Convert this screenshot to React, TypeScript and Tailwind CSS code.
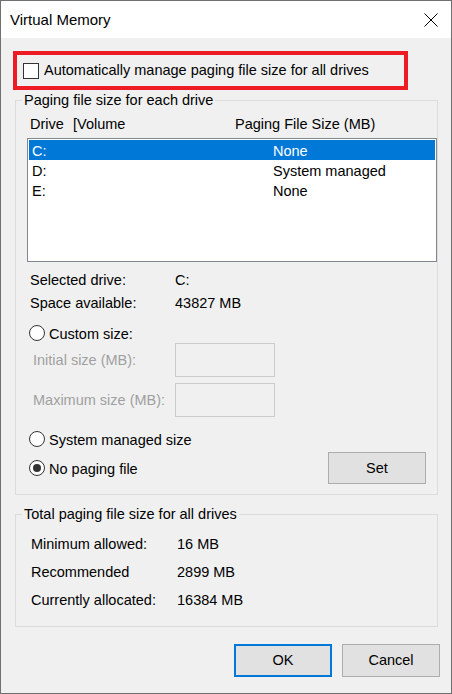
import { ReactNode } from 'react';

const font = { fontFamily: '"Liberation Sans", Arial, sans-serif' };

function Radio({ checked, label }: { checked?: boolean; label: string }) {
  return (
    <div className="flex h-[20px] items-center pl-[13px]">
      <span className="flex h-[16px] w-[16px] items-center justify-center rounded-full border border-[#333333] bg-white">
        {checked && <span className="h-[8px] w-[8px] rounded-full bg-[#333333]"></span>}
      </span>
      <span className="ml-[4px] pt-[2px] leading-[20px] text-black">{label}</span>
    </div>
  );
}

function Button({ children, primary }: { children: ReactNode; primary?: boolean }) {
  return (
    <button
      className={
        primary
          ? 'flex h-[33px] w-[98px] items-center justify-center border-2 border-[#0078d7] bg-[#e1e1e1] text-black'
          : 'flex h-[33px] w-[98px] items-center justify-center border border-[#adadad] bg-[#e1e1e1] text-black'
      }
    >
      {children}
    </button>
  );
}

const drives = [
  { drive: 'C:', size: 'None' },
  { drive: 'D:', size: 'System managed' },
  { drive: 'E:', size: 'None' },
];

const totals = [
  { label: 'Minimum allowed:', value: '16 MB' },
  { label: 'Recommended', value: '2899 MB' },
  { label: 'Currently allocated:', value: '16384 MB' },
];

export default function App() {
  return (
    <div
      className="flex h-[694px] w-[452px] flex-col border border-[#707070] bg-[#f0f0f0] text-[14.5px] text-black"
      style={font}
    >
      {/* Title bar */}
      <div className="flex h-[37px] shrink-0 items-center justify-between bg-white pl-[9px] pr-[13px]">
        <span className="pt-[2px] text-[15px]">Virtual Memory</span>
        <svg width="14" height="14" viewBox="0 0 14 14" className="mt-[1px]">
          <path d="M0.5 0.5 L13.5 13.5 M13.5 0.5 L0.5 13.5" stroke="#000" strokeWidth="1" fill="none" />
        </svg>
      </div>

      {/* Auto manage checkbox (highlighted) */}
      <div className="ml-[12px] mt-[13px] flex h-[39px] w-[395px] items-center border-4 border-[#ed1c24] pl-[6px]">
        <span className="h-[16px] w-[16px] border border-[#333333] bg-white"></span>
        <span className="ml-[5px] pt-[1px]">Automatically manage paging file size for all drives</span>
      </div>

      {/* Paging file size for each drive */}
      <fieldset className="ml-[14px] w-[423px] border border-[#dcdcdc] pb-[10px]">
        <legend className="ml-[6px] h-[20px] px-[2px] leading-[20px]">Paging file size for each drive</legend>

        <div className="mt-[4px] flex h-[20px] items-center pl-[14px] pt-[2px]">
          <span className="w-[43px]">Drive</span>
          <span className="w-[162px]">[Volume</span>
          <span>Paging File Size (MB)</span>
        </div>

        <div className="ml-[11px] mt-[4px] h-[124px] w-[410px] border border-[#828790] bg-white p-[1px]">
          {drives.map((d, i) => (
            <div
              key={d.drive}
              className={
                i === 0
                  ? 'flex h-[20px] items-center bg-[#0078d7] pl-[3px] pt-[4px] text-white'
                  : 'flex h-[20px] items-center pl-[3px] pt-[4px] text-black'
              }
            >
              <span className="w-[241px]">{d.drive}</span>
              <span>{d.size}</span>
            </div>
          ))}
        </div>

        <div className="mt-[7px] flex h-[20px] items-center pl-[14px] pt-[4px]">
          <span className="w-[145px]">Selected drive:</span>
          <span>C:</span>
        </div>
        <div className="mt-[3px] flex h-[20px] items-center pl-[14px] pt-[4px]">
          <span className="w-[145px]">Space available:</span>
          <span>43827 MB</span>
        </div>

        <div className="mt-[11px]">
          <Radio label="Custom size:" />
        </div>

        <div className="flex h-[34px] items-center pl-[17px]">
          <span className="w-[142px] pt-[2px] text-[#a0a0a0]">Initial size (MB):</span>
          <span className="h-[34px] w-[100px] border border-[#cccccc] bg-[#f0f0f0]"></span>
        </div>
        <div className="mt-[6px] flex h-[34px] items-center pl-[17px]">
          <span className="w-[142px] pt-[2px] text-[#a0a0a0]">Maximum size (MB):</span>
          <span className="h-[34px] w-[100px] border border-[#cccccc] bg-[#f0f0f0]"></span>
        </div>

        <div className="mt-[12px]">
          <Radio label="System managed size" />
        </div>

        <div className="mt-[3px] flex h-[32px] items-center justify-between pr-[11px]">
          <Radio checked label="No paging file" />
          <button className="flex h-[32px] w-[98px] items-center justify-center border border-[#adadad] bg-[#e1e1e1] pt-[1px]">
            Set
          </button>
        </div>
      </fieldset>

      {/* Totals */}
      <fieldset className="ml-[14px] mt-[9px] w-[423px] border border-[#dcdcdc] pb-[17px]">
        <legend className="ml-[6px] h-[20px] px-[2px] leading-[20px]">Total paging file size for all drives</legend>
        <div className="mt-[9px] flex flex-col gap-[8px]">
          {totals.map((t) => (
            <div key={t.label} className="flex h-[20px] items-center pl-[15px] pt-[4px]">
              <span className="w-[146px]">{t.label}</span>
              <span>{t.value}</span>
            </div>
          ))}
        </div>
      </fieldset>

      <div className="mt-[17px] flex justify-end gap-[10px] pr-[11px]">
        <Button primary>OK</Button>
        <Button>Cancel</Button>
      </div>
    </div>
  );
}
